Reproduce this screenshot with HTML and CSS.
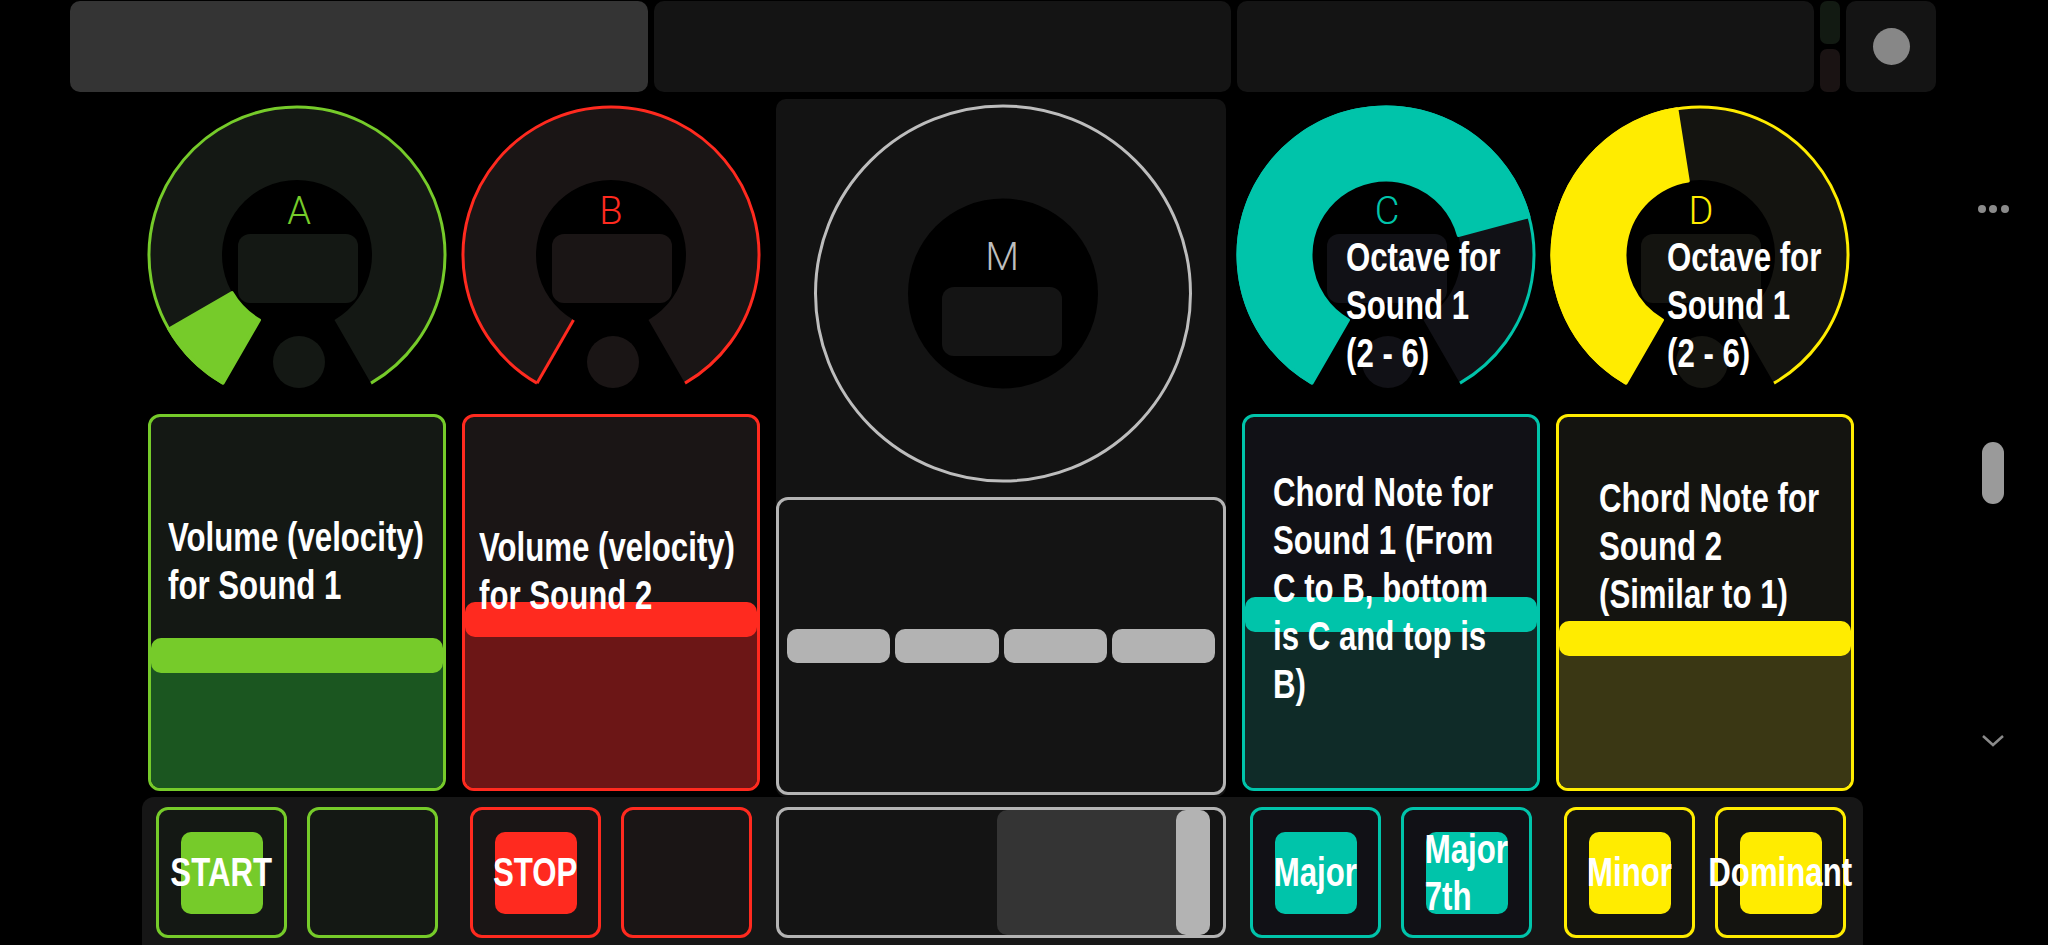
FILE: index.html
```html
<!DOCTYPE html>
<html lang="en">
<head>
<meta charset="utf-8">
<title>Controller</title>
<link rel="stylesheet" href="styles.css">
</head>
<body>
<div class="screen">
  <main class="app">
    <header class="topbar">
      <div class="tb tb-wide tb-light"></div>
      <div class="tb tb-wide"></div>
      <div class="tb tb-wide"></div>
      <div class="tb-stack">
        <div class="tb-mini tb-mini-g"></div>
        <div class="tb-mini tb-mini-r"></div>
      </div>
      <div class="tb tb-rec"><span class="rec-dot"></span></div>
    </header>

    <section class="board">
      <div class="strip strip-a">
        <div class="knob">
          <svg class="knob-svg" width="298" height="298" viewBox="0 0 298 298">
            <path class="ring" d="M75 277.17A148 148 0 1 1 223 277.17L186.5 213.95A75 75 0 1 0 111.5 213.95Z"/>
            <path class="val" d="M75 277.17A148 148 0 0 1 20.83 223L84.05 186.5A75 75 0 0 0 111.5 213.95Z"/>
            <path class="rim" d="M75 277.17A148 148 0 1 1 223 277.17"/>
            <rect class="cap" x="90" y="128" width="120" height="69" rx="12"/>
            <circle class="cap" cx="151" cy="256" r="26"/>
            <text class="knob-letter" x="151" y="118">A</text>
          </svg>
        </div>
        <div class="fader">
          <div class="level" style="height:150px"><div class="handle"></div></div>
          <p class="fader-note">Volume (velocity)<br>for Sound 1</p>
        </div>
      </div>

      <div class="strip strip-b">
        <div class="knob">
          <svg class="knob-svg" width="298" height="298" viewBox="0 0 298 298">
            <path class="ring" d="M75 277.17A148 148 0 1 1 223 277.17L186.5 213.95A75 75 0 1 0 111.5 213.95Z"/>
            <path class="val" d="M75 277.17L111.5 213.95"/>
            <path class="rim" d="M75 277.17A148 148 0 1 1 223 277.17"/>
            <rect class="cap" x="90" y="128" width="120" height="69" rx="12"/>
            <circle class="cap" cx="151" cy="256" r="26"/>
            <text class="knob-letter" x="149" y="118">B</text>
          </svg>
        </div>
        <div class="fader">
          <div class="level" style="height:186px"><div class="handle"></div></div>
          <p class="fader-note">Volume (velocity)<br>for Sound 2</p>
        </div>
      </div>

      <div class="master">
        <svg class="master-svg" width="450" height="398" viewBox="0 0 450 398">
          <circle class="master-rim" cx="227" cy="194.5" r="187.5"/>
          <circle class="master-hole" cx="227" cy="194.5" r="95"/>
          <rect class="master-cap" x="166" y="188" width="120" height="69" rx="12"/>
          <text class="master-letter" x="226" y="171">M</text>
        </svg>
        <div class="xy">
          <span class="xy-bar"></span>
          <span class="xy-bar"></span>
          <span class="xy-bar"></span>
          <span class="xy-bar"></span>
        </div>
      </div>

      <div class="strip strip-c">
        <div class="knob knob-shift">
          <svg class="knob-svg" width="298" height="298" viewBox="0 0 298 298">
            <path class="ring" d="M75 277.17A148 148 0 1 1 223 277.17L186.5 213.95A75 75 0 1 0 111.5 213.95Z"/>
            <path class="val" d="M75 277.17A148 148 0 1 1 291.96 110.7L221.44 129.59A75 75 0 1 0 111.5 213.95Z"/>
            <path class="rim" d="M75 277.17A148 148 0 1 1 223 277.17"/>
            <rect class="cap" x="90" y="128" width="120" height="69" rx="12"/>
            <circle class="cap" cx="151" cy="256" r="26"/>
            <text class="knob-letter" x="150" y="118">C</text>
          </svg>
          <p class="knob-note">Octave for<br>Sound 1<br>(2 - 6)</p>
        </div>
        <div class="fader">
          <div class="level" style="height:191px"><div class="handle"></div></div>
          <p class="fader-note">Chord Note for<br>Sound 1 (From<br>C to B, bottom<br>is C and top is<br>B)</p>
        </div>
      </div>

      <div class="strip strip-d">
        <div class="knob knob-shift">
          <svg class="knob-svg" width="298" height="298" viewBox="0 0 298 298">
            <path class="ring" d="M75 277.17A148 148 0 1 1 223 277.17L186.5 213.95A75 75 0 1 0 111.5 213.95Z"/>
            <path class="val" d="M75 277.17A148 148 0 0 1 125.85 2.82L137.27 74.92A75 75 0 0 0 111.5 213.95Z"/>
            <path class="rim" d="M75 277.17A148 148 0 1 1 223 277.17"/>
            <rect class="cap" x="90" y="128" width="120" height="69" rx="12"/>
            <circle class="cap" cx="151" cy="256" r="26"/>
            <text class="knob-letter" x="150" y="118">D</text>
          </svg>
          <p class="knob-note">Octave for<br>Sound 1<br>(2 - 6)</p>
        </div>
        <div class="fader">
          <div class="level" style="height:167px"><div class="handle"></div></div>
          <p class="fader-note">Chord Note for<br>Sound 2<br>(Similar to 1)</p>
        </div>
      </div>
    </section>

    <footer class="pads">
      <div class="pad-group strip-a">
        <div class="btn"><div class="key"><span class="key-text">START</span></div></div>
        <div class="btn"></div>
      </div>
      <div class="pad-group strip-b">
        <div class="btn"><div class="key"><span class="key-text">STOP</span></div></div>
        <div class="btn"></div>
      </div>
      <div class="slider">
        <div class="slider-range"><span class="slider-thumb"></span></div>
      </div>
      <div class="pad-group strip-c">
        <div class="btn"><div class="key"><span class="key-text">Major</span></div></div>
        <div class="btn"><div class="key"><span class="key-text">Major 7th</span></div></div>
      </div>
      <div class="pad-group strip-d">
        <div class="btn"><div class="key"><span class="key-text">Minor</span></div></div>
        <div class="btn"><div class="key"><span class="key-text">Dominant</span></div></div>
      </div>
    </footer>
  </main>

  <aside class="rail">
    <div class="rail-dots"><span></span><span></span><span></span></div>
    <div class="rail-thumb"></div>
    <svg class="rail-chevron" width="24" height="13" viewBox="0 0 24 13">
      <polyline points="2,2 12,11 22,2"/>
    </svg>
  </aside>
</div>
</body>
</html>
```

FILE: styles.css
```css
* { box-sizing: border-box; }

html, body {
  margin: 0;
  padding: 0;
  background: #000;
  overflow: hidden;
}

body {
  font-family: "Liberation Sans Narrow", "Arial Narrow", "Liberation Sans", sans-serif;
  color: #fff;
}

.screen {
  display: flex;
  width: 2048px;
  height: 945px;
}

.app {
  flex: 0 0 1938px;
}

/* ---------- top bar ---------- */
.topbar {
  display: flex;
  gap: 6px;
  height: 91px;
  margin: 1px 0 0 70px;
}

.tb {
  background: #141414;
  border-radius: 10px;
}

.tb-wide { width: 578px; }
.tb-wide + .tb-wide { width: 577px; }
.tb-light { background: #343434; }

.tb-stack {
  display: flex;
  flex-direction: column;
  gap: 5px;
  width: 20px;
}

.tb-mini {
  flex: 1;
  border-radius: 7px;
}

.tb-mini-g { background: #121a12; }
.tb-mini-r { background: #1a1313; }

.tb-rec {
  width: 90px;
  display: flex;
  align-items: center;
  justify-content: center;
}

.rec-dot {
  width: 37px;
  height: 37px;
  border-radius: 50%;
  background: #878787;
}

/* ---------- shared condensed label text ---------- */
.knob-note,
.fader-note,
.key-text {
  font-size: 40px;
  line-height: 48px;
  font-weight: 700;
  color: #fff;
  transform: scaleX(0.78);
}

/* ---------- board ---------- */
.board {
  display: grid;
  grid-template-columns: 298px 298px 450px 298px 298px;
  column-gap: 16px;
  height: 698px;
  margin: 7px 0 0 148px;
}

.strip-a { --accent: #76cb2a; --dim: #141814; --deep: #1b5620; }
.strip-b { --accent: #ff2a1f; --dim: #1a1515; --deep: #6c1616; }
.strip-c { --accent: #00c4aa; --dim: #111116; --deep: #0f2b28; }
.strip-d { --accent: #ffec00; --dim: #141410; --deep: #3a3714; }

.strip {
  display: flex;
  flex-direction: column;
  gap: 10px;
  padding-top: 7px;
}

.knob {
  position: relative;
  width: 298px;
  height: 298px;
}

.knob-shift { margin-left: -5px; }

.knob-svg {
  display: block;
  overflow: visible;
}

.ring { fill: var(--dim); }
.cap { fill: var(--dim); }

.val {
  fill: var(--accent);
  stroke: var(--accent);
  stroke-width: 3;
  stroke-linejoin: round;
}

.rim {
  fill: none;
  stroke: var(--accent);
  stroke-width: 3;
}

.knob-letter {
  fill: var(--accent);
  font-family: Roboto, "Liberation Sans", sans-serif;
  font-weight: 300;
  font-size: 38px;
  text-anchor: middle;
}

.knob-note {
  position: absolute;
  left: 109px;
  top: 127px;
  margin: 0;
  white-space: nowrap;
  transform-origin: 0 0;
}

.strip-d .knob-note { left: 116px; }

.fader {
  position: relative;
  height: 377px;
  border: 3px solid var(--accent);
  border-radius: 12px;
  background: var(--dim);
  overflow: hidden;
  display: flex;
  flex-direction: column;
  justify-content: flex-end;
}

.level {
  background: linear-gradient(transparent 17px, var(--deep) 17px);
}

.handle {
  height: 35px;
  border-radius: 10px;
  background: var(--accent);
}

.fader-note {
  position: absolute;
  margin: 0;
  white-space: nowrap;
  transform-origin: 0 0;
}

.strip-a .fader-note { left: 17px; top: 96px; }
.strip-b .fader-note { left: 14px; top: 106px; }
.strip-c .fader-note { left: 28px; top: 51px; }
.strip-d .fader-note { left: 40px; top: 57px; }

/* ---------- master ---------- */
.master {
  display: flex;
  flex-direction: column;
  background: #131313;
  border-radius: 10px;
}

.master-svg { display: block; }

.master-rim {
  fill: none;
  stroke: #bdbdbd;
  stroke-width: 3;
}

.master-hole { fill: #000; }
.master-cap { fill: #141414; }

.master-letter {
  fill: #bdbdbd;
  font-family: Roboto, "Liberation Sans", sans-serif;
  font-weight: 300;
  font-size: 39px;
  text-anchor: middle;
}

.xy {
  height: 298px;
  border: 3px solid #b4b4b4;
  border-radius: 12px;
  background: #141414;
  display: flex;
  align-items: center;
  gap: 5px;
  padding: 0 8px;
}

.xy-bar {
  flex: 1;
  height: 34px;
  border-radius: 10px;
  background: #b3b3b3;
}

/* ---------- pads ---------- */
.pads {
  display: grid;
  grid-template-columns: 298px 298px 450px 298px 298px;
  column-gap: 16px;
  width: 1721px;
  height: 160px;
  margin-left: 142px;
  padding: 10px 9px 0 6px;
  background: #161616;
  border-radius: 12px 12px 0 0;
}

.pad-group {
  display: flex;
  justify-content: center;
  gap: 20px;
}

.btn {
  width: 131px;
  height: 131px;
  border: 3px solid var(--accent);
  border-radius: 12px;
  background: var(--dim);
  display: flex;
  align-items: center;
  justify-content: center;
}

.key {
  width: 82px;
  height: 82px;
  border-radius: 10px;
  background: var(--accent);
  display: flex;
  align-items: center;
  justify-content: center;
}

.key-text {
  line-height: 47px;
  transform-origin: 50% 50%;
}

.slider {
  height: 131px;
  border: 3px solid #b4b4b4;
  border-radius: 12px;
  background: #141414;
  display: flex;
  justify-content: flex-end;
  padding-right: 13px;
}

.slider-range {
  width: 213px;
  border-radius: 10px;
  background: #343434;
  display: flex;
  justify-content: flex-end;
}

.slider-thumb {
  width: 34px;
  border-radius: 10px;
  background: #b3b3b3;
}

/* ---------- side rail ---------- */
.rail {
  flex: 1;
  display: flex;
  flex-direction: column;
  align-items: center;
  padding-top: 205px;
}

.rail-dots {
  display: flex;
  gap: 3.5px;
  height: 8px;
}

.rail-dots span {
  width: 8px;
  height: 8px;
  border-radius: 50%;
  background: #8a8a8a;
}

.rail-thumb {
  width: 22px;
  height: 62px;
  margin-top: 229px;
  border-radius: 11px;
  background: #9a9a9a;
}

.rail-chevron {
  display: block;
  margin-top: 230px;
}

.rail-chevron polyline {
  fill: none;
  stroke: #8a8a8a;
  stroke-width: 2.5;
}
```
